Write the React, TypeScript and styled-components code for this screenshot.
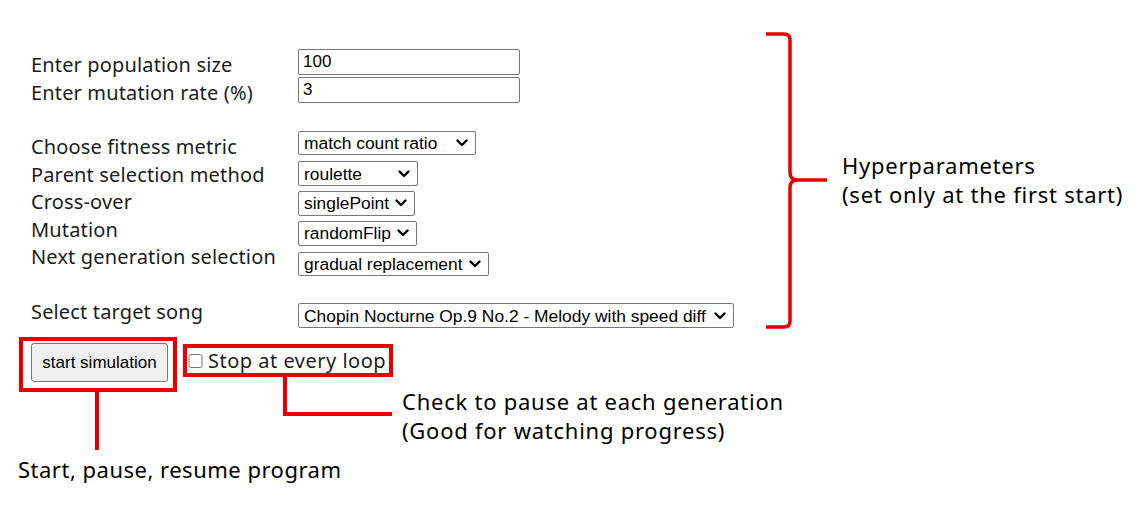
import React from 'react';
import styled, { createGlobalStyle } from 'styled-components';

const RED = '#e80000';
const LABEL_FONT = '"Noto Sans", "Open Sans", sans-serif';
const FORM_FONT = '"Liberation Sans", Arial, sans-serif';

// chevron drawn for the dropdowns, same bold "v" as the reference
const CHEVRON =
  "url(\"data:image/svg+xml,%3Csvg xmlns='http://www.w3.org/2000/svg' width='12' height='8' viewBox='0 0 12 8'%3E%3Cpath d='M1.5 1.5 L6 6 L10.5 1.5' fill='none' stroke='%23000' stroke-width='2.4' stroke-linecap='round' stroke-linejoin='round'/%3E%3C/svg%3E\")";

const GlobalStyle = createGlobalStyle`
  html, body {
    margin: 0;
    background: #ffffff;
  }
  body {
    font-family: ${LABEL_FONT};
    color: #000;
  }
`;

type SelectSpec = { value: string; width: number; gap: number };

const selects: SelectSpec[] = [
  { value: 'match count ratio', width: 178, gap: 28 },
  { value: 'roulette', width: 120, gap: 6 },
  { value: 'singlePoint', width: 117, gap: 5 },
  { value: 'randomFlip', width: 119, gap: 5 },
  { value: 'gradual replacement', width: 191, gap: 6 },
];

export default function App() {
  return (
    <Page>
      <GlobalStyle />
      <LeftPanel>
        <Fields>
          <LabelColumn>
            <Label>Enter population size</Label>
            <Label>Enter mutation rate (%)</Label>
            <Label $spaced>Choose fitness metric</Label>
            <Label>Parent selection method</Label>
            <Label>Cross-over</Label>
            <Label>Mutation</Label>
            <Label>Next generation selection</Label>
            <Label $spaced>Select target song</Label>
          </LabelColumn>
          <ControlColumn>
            <TextInput defaultValue="100" />
            <TextInput defaultValue="3" $gap={2} />
            {selects.map((s) => (
              <Select key={s.value} $width={s.width} $gap={s.gap} defaultValue={s.value}>
                <option>{s.value}</option>
              </Select>
            ))}
            <Select $width={436} $gap={27} defaultValue="song">
              <option value="song">Chopin Nocturne Op.9 No.2 - Melody with speed diff</option>
            </Select>
          </ControlColumn>
        </Fields>

        <ActionRow>
          <ButtonGroup>
            <ButtonFrame>
              <StartButton>start simulation</StartButton>
            </ButtonFrame>
            <VLine />
            <Caption>Start, pause, resume program</Caption>
          </ButtonGroup>
          <CheckGroup>
            <CheckFrame>
              <CheckLabel>
                <CheckBox type="checkbox" />
                Stop at every loop
              </CheckLabel>
            </CheckFrame>
            <NoteRow>
              <Connector />
              <Note>
                Check to pause at each generation
                <br />
                (Good for watching progress)
              </Note>
            </NoteRow>
          </CheckGroup>
        </ActionRow>
      </LeftPanel>

      <BraceNote>
        <svg width="64" height="300" viewBox="0 0 64 300" fill="none">
          <path
            d="M2 4 H20 Q26 4 26 10 V142 Q26 150 33 150 Q26 150 26 158 V291 Q26 297 20 297 H2"
            stroke={RED}
            strokeWidth="3.5"
            strokeLinejoin="round"
          />
          <path d="M30 150 H63" stroke={RED} strokeWidth="3.5" />
        </svg>
        <Note>
          Hyperparameters
          <br />
          (set only at the first start)
        </Note>
      </BraceNote>
    </Page>
  );
}

const Page = styled.div`
  display: flex;
  align-items: flex-start;
  padding-top: 30px;
  width: 1139px;
  height: 512px;
  box-sizing: border-box;
  overflow: hidden;
`;

const LeftPanel = styled.div`
  width: 764px;
  flex-shrink: 0;
  padding-top: 19px;
`;

const Fields = styled.div`
  display: flex;
  padding-left: 31px;
  height: 279px;
`;

const LabelColumn = styled.div`
  width: 267px;
  padding-top: 2px;
  display: flex;
  flex-direction: column;
`;

const Label = styled.div<{ $spaced?: boolean }>`
  font-size: 20px;
  line-height: 27.5px;
  letter-spacing: 0.15px;
  color: #1c1c1c;
  white-space: nowrap;
  margin-top: ${(p) => (p.$spaced ? '27px' : '0')};
`;

const ControlColumn = styled.div`
  display: flex;
  flex-direction: column;
  align-items: flex-start;
`;

const TextInput = styled.input<{ $gap?: number }>`
  box-sizing: border-box;
  width: 222px;
  height: 26px;
  margin: ${(p) => p.$gap ?? 0}px 0 0;
  padding: 1px 4px;
  border: 1px solid #767676;
  border-radius: 2px;
  font-family: ${FORM_FONT};
  font-size: 17px;
  color: #000;
  background: #fff;
`;

const Select = styled.select<{ $width: number; $gap: number }>`
  appearance: none;
  -webkit-appearance: none;
  box-sizing: border-box;
  width: ${(p) => p.$width}px;
  height: 25px;
  margin: ${(p) => p.$gap}px 0 0;
  padding: 0 22px 0 5px;
  border: 1px solid #767676;
  border-radius: 2px;
  font-family: ${FORM_FONT};
  font-size: 17.4px;
  color: #000;
  background: #fff ${CHEVRON} no-repeat right 7px center / 12px 8px;
`;

const ActionRow = styled.div`
  display: flex;
  align-items: flex-start;
  margin-top: 9px;
  padding-left: 19px;
`;

const ButtonGroup = styled.div`
  width: 158px;
  display: flex;
  flex-direction: column;
`;

const ButtonFrame = styled.div`
  box-sizing: border-box;
  width: 158px;
  height: 55px;
  border: 4px solid ${RED};
  padding: 2px 0 0 8px;
`;

const StartButton = styled.button`
  box-sizing: border-box;
  width: 137px;
  height: 39px;
  margin: 0;
  padding: 0;
  border: 1px solid #767676;
  border-radius: 3px;
  background: #efefef;
  font-family: ${FORM_FONT};
  font-size: 17px;
  color: #000;
`;

const VLine = styled.div`
  width: 4px;
  height: 58px;
  margin-left: 76px;
  background: ${RED};
`;

const Caption = styled.div`
  margin: 5px 0 0 -1px;
  font-size: 22px;
  line-height: 29px;
  letter-spacing: 0.5px;
  white-space: nowrap;
`;

const CheckGroup = styled.div`
  margin: 7px 0 0 6px;
  display: flex;
  flex-direction: column;
`;

const CheckFrame = styled.div`
  box-sizing: border-box;
  width: 210px;
  height: 33px;
  border: 4px solid ${RED};
  display: flex;
  align-items: center;
`;

const CheckLabel = styled.label`
  display: flex;
  align-items: center;
  font-size: 20px;
  line-height: 25px;
  letter-spacing: 0.5px;
  color: #1c1c1c;
  white-space: nowrap;
`;

const CheckBox = styled.input`
  width: 15px;
  height: 14px;
  margin: 0 5px 0 1px;
`;

const NoteRow = styled.div`
  display: flex;
  align-items: flex-start;
`;

const Connector = styled.div`
  box-sizing: border-box;
  width: 109px;
  height: 39px;
  margin-left: 100px;
  border-left: 4px solid ${RED};
  border-bottom: 4px solid ${RED};
`;

const Note = styled.div`
  margin: 10px 0 0 10px;
  font-size: 22px;
  line-height: 29px;
  letter-spacing: 0.75px;
  white-space: nowrap;
`;

const BraceNote = styled.div`
  display: flex;
  align-items: center;
  svg {
    flex-shrink: 0;
  }
  ${Note} {
    margin: 0 0 0 14px;
  }
`;
